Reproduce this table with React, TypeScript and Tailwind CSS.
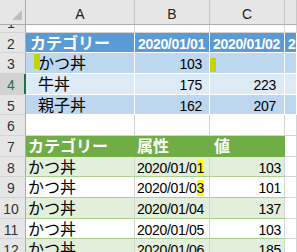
import React from "react";

// column widths include the 1px right gridline
const COL = ["w-[26px]", "w-[109px]", "w-[75px]", "w-[75px]", "w-[12px]"];

type CellSpec = {
  text?: React.ReactNode;
  cls?: string;
};

function RowHeader({ label, selected }: { label: string; selected?: boolean }) {
  return (
    <div
      className={`relative ${COL[0]} shrink-0 flex items-center justify-center pr-[3px] pt-[2px] border-r border-b border-r-[#ababab] border-b-[#d4d4d4] text-[14px] ${
        selected ? "bg-[#d2d2d2] text-[#217346]" : "bg-[#e6e6e6] text-[#333]"
      }`}
    >
      {label}
      {selected && <div className="absolute right-[-1px] top-0 h-full w-[2px] bg-[#217346]" />}
    </div>
  );
}

function Row({
  h,
  label,
  cells,
  selected,
}: {
  h: string;
  label: string;
  cells: CellSpec[];
  selected?: boolean;
}) {
  return (
    <div className={`flex ${h} shrink-0`}>
      <RowHeader label={label} selected={selected} />
      {cells.map((c, i) => (
        <div
          key={i}
          className={`relative ${COL[i + 1]} shrink-0 flex items-center pt-[2px] overflow-hidden whitespace-nowrap border-r border-b ${c.cls ?? ""}`}
        >
          {c.text}
        </div>
      ))}
    </div>
  );
}

const jp = "text-[16px]";
const num = "text-[14px] tracking-[-0.3px]";

const plain = "bg-white border-r-[#d4d4d4] border-b-[#d4d4d4]";
const blueHead = "bg-[#5b9bd5] border-white text-white font-bold";
const blueDark = "bg-[#bdd7ee] border-white text-black";
const blueLight = "bg-[#ddebf7] border-white text-black";
const greenHead = "bg-[#70ad47] border-r-[#70ad47] border-b-[#70ad47] text-white font-bold";
const greenRow = "bg-[#e2efda] border-r-[#d4d4d4] border-b-[#a9d08e] text-black";
const whiteRow = "bg-white border-r-[#d4d4d4] border-b-[#a9d08e] text-black";

function Mark({ children }: { children: React.ReactNode }) {
  return <span className="bg-[#ffff00]">{children}</span>;
}

function blueRow(bg: string, name: string, b: React.ReactNode, c: React.ReactNode): CellSpec[] {
  return [
    { text: <span className={`${jp} pl-[12px]`}>{name}</span>, cls: bg },
    { text: <span className={num}>{b}</span>, cls: `${bg} justify-end pr-[7px]` },
    { text: <span className={num}>{c}</span>, cls: `${bg} justify-end pr-[8px]` },
    { cls: bg },
  ];
}

function greenTableRow(bg: string, date: React.ReactNode, value: string): CellSpec[] {
  return [
    { text: <span className={`${jp} pl-[2px]`}>かつ丼</span>, cls: bg },
    { text: <span className={`${num} pl-[2px]`}>{date}</span>, cls: bg },
    { text: <span className={num}>{value}</span>, cls: `${bg} justify-end pr-[3px]` },
    { cls: plain },
  ];
}

export default function App() {
  return (
    <div className="w-[297px] h-[252px] overflow-hidden bg-white font-[family-name:'Liberation_Sans','Noto_Sans_CJK_JP',sans-serif] text-black leading-none">
      {/* column headers */}
      <div className="flex h-[25px] shrink-0">
        <div className={`relative ${COL[0]} shrink-0 bg-[#e6e6e6] border-r border-b border-r-[#ababab] border-b-[#ababab]`}>
          <svg className="absolute left-0 top-0" width="25" height="24" viewBox="0 0 25 24">
            <polygon points="12,20 22,20 22,10" fill="#bfbfbf" />
          </svg>
        </div>
        {["A", "B", "C", ""].map((l, i) => (
          <div
            key={i}
            className={`${COL[i + 1]} shrink-0 flex items-center justify-center pt-[4px] bg-[#e6e6e6] border-r border-b border-r-[#c8c8c8] border-b-[#ababab] text-[14px] text-[#222]`}
          >
            {l}
          </div>
        ))}
      </div>

      {/* row 1, scrolled mostly out of view */}
      <div className="flex h-[8px] shrink-0">
        <div className={`${COL[0]} shrink-0 flex items-end justify-center pr-[3px] overflow-hidden bg-[#e6e6e6] border-r border-b border-r-[#ababab] border-b-[#d4d4d4] text-[14px] text-[#333]`}>
          <div className="h-[20px] shrink-0 flex items-center pt-[2px]">1</div>
        </div>
        {[1, 2, 3, 4].map((i) => (
          <div key={i} className={`${COL[i]} shrink-0 border-r border-b ${plain}`} />
        ))}
      </div>

      <Row
        h="h-[20px]"
        label="2"
        cells={[
          { text: <span className={`${jp} pl-[4px]`}>カテゴリー</span>, cls: blueHead },
          { text: <span className={num}>2020/01/01</span>, cls: `${blueHead} justify-end pr-[4px]` },
          { text: <span className={num}>2020/01/02</span>, cls: `${blueHead} justify-end pr-[4px]` },
          { text: <span className={`${num} pl-[3px]`}>2020/01/03</span>, cls: blueHead },
        ]}
      />
      <div className="relative">
        <Row h="h-[21px]" label="3" cells={blueRow(blueDark, "かつ丼", "103", "")} />
        <div className="absolute left-[34px] top-[1px] h-[15px] w-[6px] bg-[#c5d400]" />
        <div className="absolute left-[210px] top-[5px] h-[14px] w-[6px] bg-[#c5d400]" />
      </div>
      <Row h="h-[21px]" label="4" selected cells={blueRow(blueLight, "牛丼", "175", "223")} />
      <Row h="h-[20px]" label="5" cells={blueRow(blueDark, "親子丼", "162", "207")} />
      <Row h="h-[21px]" label="6" cells={[{ cls: plain }, { cls: plain }, { cls: plain }, { cls: plain }]} />
      <Row
        h="h-[21px]"
        label="7"
        cells={[
          { text: <span className={`${jp} pl-[2px]`}>カテゴリー</span>, cls: greenHead },
          { text: <span className={`${jp} pl-[2px]`}>属性</span>, cls: greenHead },
          { text: <span className={`${jp} pl-[4px]`}>値</span>, cls: greenHead },
          { cls: plain },
        ]}
      />
      <Row h="h-[20px]" label="8" cells={greenTableRow(greenRow, <>2020/01/0<Mark>1</Mark></>, "103")} />
      <Row h="h-[21px]" label="9" cells={greenTableRow(whiteRow, <>2020/01/0<Mark>3</Mark></>, "101")} />
      <Row h="h-[21px]" label="10" cells={greenTableRow(greenRow, "2020/01/04", "137")} />
      <Row h="h-[20px]" label="11" cells={greenTableRow(whiteRow, "2020/01/05", "103")} />
      <Row h="h-[21px]" label="12" cells={greenTableRow(greenRow, "2020/01/06", "185")} />
    </div>
  );
}
